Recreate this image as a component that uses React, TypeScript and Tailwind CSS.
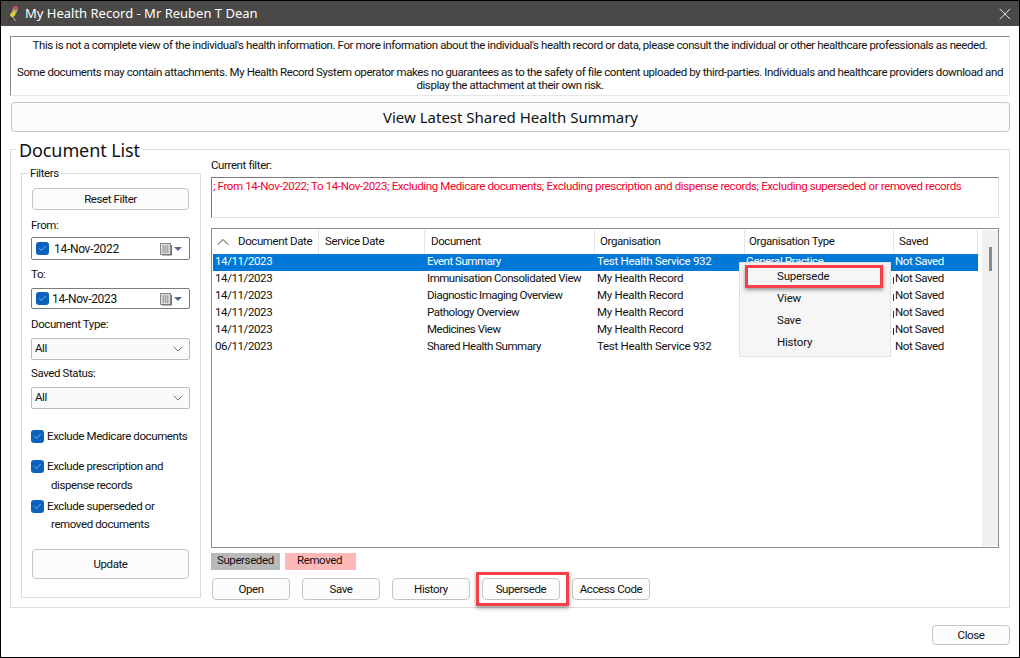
import React from "react";
import { ChevronDown, ChevronUp, X, Check } from "lucide-react";

function Btn({ label, className = "" }: { label: string; className?: string }) {
  return (
    <div className={`flex items-center justify-center rounded-[4px] border border-[#c4c4c4] bg-[#fcfcfc] pt-[2px] text-[#111] ${className}`}>
      {label}
    </div>
  );
}

function CheckBox() {
  return (
    <span className="flex h-[13px] w-[13px] shrink-0 items-center justify-center rounded-[3px] bg-[#0a62bd]">
      <Check size={9} strokeWidth={1.5} className="text-[#dfeaf7]" />
    </span>
  );
}

function CalendarIcon() {
  return (
    <svg width="24" height="14" viewBox="0 0 24 14" className="shrink-0">
      <rect x="0.5" y="1.5" width="10" height="11" fill="#dcdcdc" stroke="#8a8a8a" />
      <path d="M2 4h7M2 6h7M2 8h7M2 10h7M3.5 3.5v7.5M5.5 3.5v7.5M7.5 3.5v7.5" stroke="#9a9a9a" strokeWidth="0.7" />
      <path d="M11.5 3v10H2" stroke="#6b6b6b" fill="none" />
      <path d="M14 5h8l-4 4z" fill="#56678a" />
    </svg>
  );
}

function DateField({ value, h, gap }: { value: string; h: string; gap: string }) {
  return (
    <div className={`flex items-center rounded-[2px] border border-[#7a7a7a] bg-white pr-[5px] pl-[4px] text-[12px] tracking-[-0.3px] text-[#111] ${h}`}>
      <CheckBox />
      <span className={gap}>{value}</span>
      <span className="ml-auto flex"><CalendarIcon /></span>
    </div>
  );
}

function SelectField() {
  return (
    <div className="flex h-[22px] items-center justify-between rounded-[2px] border border-[#bcbcbc] bg-[#fafafa] pr-[3px] pl-[3px] text-[#111]">
      <span>All</span>
      <ChevronDown size={16} strokeWidth={1} className="text-[#333]" />
    </div>
  );
}

function Bird() {
  return (
    <svg width="11" height="17" viewBox="0 0 11 17" className="shrink-0">
      <path d="M6 1 L9 1 L10 4 L8 9 L5 12 L2 11 L4 6 Z" fill="#a89f92" />
      <circle cx="7.6" cy="2.8" r="1.9" fill="#c9473c" />
      <path d="M2 9 L7 6 L7 10 L4 13 Z" fill="#e6cf2c" />
      <path d="M3 12 L0.5 15.5 L1.5 16.5 L5 13 Z" fill="#3f3d38" />
      <path d="M5 12 L7.5 16" stroke="#c9c0b0" strokeWidth="0.9" />
    </svg>
  );
}

const rows = [
  ["14/11/2023", "Event Summary", "Test Health Service 932"],
  ["14/11/2023", "Immunisation Consolidated View", "My Health Record"],
  ["14/11/2023", "Diagnostic Imaging Overview", "My Health Record"],
  ["14/11/2023", "Pathology Overview", "My Health Record"],
  ["14/11/2023", "Medicines View", "My Health Record"],
  ["06/11/2023", "Shared Health Summary", "Test Health Service 932"],
];

const columns = "grid grid-cols-[106px_106px_170px_150px_149px_84px]";

function HeaderCell({ children, pad = "pl-[6px]" }: { children: React.ReactNode; pad?: string }) {
  return <div className={`flex h-[24px] items-center whitespace-nowrap border-r border-[#e5e5e5] ${pad}`}>{children}</div>;
}

export default function App() {
  return (
    <div className="flex h-[658px] w-[1020px] flex-col overflow-hidden border border-black bg-white font-['Roboto','Liberation_Sans',sans-serif] text-[11.5px] tracking-[-0.4px] text-[#111]">
      <div className="flex h-[25px] shrink-0 items-center bg-[#4a4947] pr-[4px] pl-[7px] font-['Noto_Sans',sans-serif] tracking-normal text-white">
        <Bird />
        <span className="ml-[6px] text-[13px]">My Health Record - Mr Reuben T Dean</span>
        <X size={20} strokeWidth={1} className="ml-auto text-white" />
      </div>

      <div className="flex flex-col px-[9px]">
        <div className="mt-[10px] flex h-[60px] flex-col border border-t-[#8a8a8a] border-r-[#e6e6e6] border-b-[#e6e6e6] border-l-[#8a8a8a] pt-[2px] text-center leading-[13.5px] tracking-[-0.41px]">
          <p>This is not a complete view of the individual's health information. For more information about the individual's health record or data, please consult the individual or other healthcare professionals as needed.</p>
          <p className="mt-[13px]">Some documents may contain attachments. My Health Record System operator makes no guarantees as to the safety of file content uploaded by third-parties. Individuals and healthcare providers download and<br />display the attachment at their own risk.</p>
        </div>

        <Btn label="View Latest Shared Health Summary" className="mt-[6px] ml-px h-[30px] !pt-0 font-['Noto_Sans',sans-serif] text-[15px] tracking-normal" />

        <div className="relative mt-[17px] flex h-[459px] border border-[#dcdcdc] pl-[10px]">
          <span className="absolute -top-[12px] left-[5px] bg-white px-[3px] font-['Noto_Sans',sans-serif] text-[18px] leading-[24px] tracking-[-0.1px]">Document List</span>

          <div className="relative mt-[23px] flex h-[425px] w-[180px] shrink-0 flex-col border border-[#dcdcdc] pr-[10px] pl-[9px]">
            <span className="absolute -top-[9px] left-[6px] bg-white px-[2px] leading-[16px]">Filters</span>
            <Btn label="Reset Filter" className="mx-px mt-[14px] h-[22px]" />
            <div className="mt-[7px] h-[16px] leading-[16px]">From:</div>
            <div className="mt-[4px]"><DateField value="14-Nov-2022" h="h-[23px]" gap="ml-[5px]" /></div>
            <div className="mt-[6px] h-[16px] leading-[16px]">To:</div>
            <div className="mt-[6px]"><DateField value="14-Nov-2023" h="h-[21px]" gap="ml-[3px]" /></div>
            <div className="mt-[7px] h-[16px] leading-[16px]">Document Type:</div>
            <div className="mt-[6px]"><SelectField /></div>
            <div className="mt-[5px] h-[16px] leading-[16px]">Saved Status:</div>
            <div className="mt-[6px]"><SelectField /></div>
            <div className="mt-[20px] flex h-[14px] items-center gap-[3px] whitespace-nowrap leading-[14px]"><CheckBox />Exclude Medicare documents</div>
            <div className="mt-[16px] flex h-[14px] items-center gap-[3px] whitespace-nowrap leading-[14px]"><CheckBox />Exclude prescription and</div>
            <div className="mt-[4px] h-[16px] pl-[20px] leading-[16px]">dispense records</div>
            <div className="mt-[6px] flex h-[14px] items-center gap-[3px] whitespace-nowrap leading-[14px]"><CheckBox />Exclude superseded or</div>
            <div className="mt-[3px] h-[16px] pl-[20px] leading-[16px]">removed documents</div>
            <Btn label="Update" className="mx-px mt-[17px] h-[30px]" />
          </div>

          <div className="ml-[10px] flex w-[788px] flex-col">
            <div className="mt-[8px] h-[15px] leading-[15px]">Current filter:</div>
            <div className="mt-[4px] h-[41px] overflow-hidden border border-t-[#7a7a7a] border-r-[#e0e0e0] border-b-[#e0e0e0] border-l-[#7a7a7a] pt-[1px] pl-px leading-[15px] tracking-[-0.36px] text-[#f5002d]">
              ; From 14-Nov-2022; To 14-Nov-2023; Excluding Medicare documents; Excluding prescription and dispense records; Excluding superseded or removed records
            </div>

            <div className="relative mt-[10px] flex h-[320px] border border-[#8c8c8c] pt-px pl-px">
              <div className="w-[765px]">
                <div className={columns}>
                  <HeaderCell><ChevronUp size={20} strokeWidth={1} className="mr-[5px] -ml-[6px] shrink-0" />Document Date</HeaderCell>
                  <HeaderCell>Service Date</HeaderCell>
                  <HeaderCell>Document</HeaderCell>
                  <HeaderCell pad="pl-[5px]">Organisation</HeaderCell>
                  <HeaderCell pad="pl-[4px]">Organisation Type</HeaderCell>
                  <HeaderCell pad="pl-[5px]">Saved</HeaderCell>
                </div>
                {rows.map((r, i) => (
                  <div key={i} className={`${columns} h-[17px] items-center whitespace-nowrap pb-[2px] leading-[15px] ${i === 0 ? "bg-[#0078d7] text-white" : ""}`}>
                    <span className="pl-[2px]">{r[0]}</span>
                    <span />
                    <span className="pl-[2px] tracking-[-0.48px]">{r[1]}</span>
                    <span className="pl-[2px] tracking-[-0.28px]">{r[2]}</span>
                    <span className="flex items-center pl-px">
                      {i === 0 && "General Practice"}
                      {i > 0 && i < 5 && <span className="mt-[4px] ml-auto h-[7px] w-px bg-[#333]" />}
                    </span>
                    <span className="pl-px">Not Saved</span>
                  </div>
                ))}
              </div>
              <div className="ml-auto h-[316px] w-[16px] bg-[#f0f0f0] pt-[17px] pl-[7px]">
                <div className="h-[24px] w-[3px] bg-[#8a8a8a]" />
              </div>

              <div className="absolute top-[33px] left-[527px] flex h-[95px] w-[152px] flex-col border border-[#e0e0e0] bg-[#f6f6f6] pl-[37px]">
                <div className="mt-[2px] h-[22px] leading-[22px] tracking-[-0.2px]">Supersede</div>
                <div className="h-[22px] leading-[22px] tracking-[-0.2px]">View</div>
                <div className="h-[22px] leading-[22px] tracking-[-0.2px]">Save</div>
                <div className="h-[22px] leading-[22px] tracking-[-0.2px]">History</div>
              </div>
              <div className="absolute top-[36px] left-[533px] h-[23px] w-[138px] border-[3px] border-[#f5404a] shadow-[0_2px_4px_rgba(0,0,0,0.4)]" />
            </div>

            <div className="mt-[5px] flex h-[17px] gap-[5px] leading-[15px]">
              <span className="w-[69px] bg-[#b9b9b9] pl-[6px]">Superseded</span>
              <span className="w-[71px] bg-[#ffb8b8] pl-[12px]">Removed</span>
            </div>

            <div className="relative mt-[8px] flex h-[22px] pl-px">
              <Btn label="Open" className="w-[78px]" />
              <Btn label="Save" className="ml-[12px] w-[78px]" />
              <Btn label="History" className="ml-[12px] w-[78px]" />
              <Btn label="Supersede" className="ml-[12px] w-[78px]" />
              <Btn label="Access Code" className="ml-[12px] w-[78px]" />
              <div className="absolute -top-[6px] left-[265px] h-[34px] w-[93px] border-[3px] border-[#f5404a] shadow-[0_2px_4px_rgba(0,0,0,0.4)]" />
            </div>
          </div>
        </div>

        <div className="mt-[17px] flex justify-end">
          <Btn label="Close" className="h-[20px] w-[78px]" />
        </div>
      </div>
    </div>
  );
}
